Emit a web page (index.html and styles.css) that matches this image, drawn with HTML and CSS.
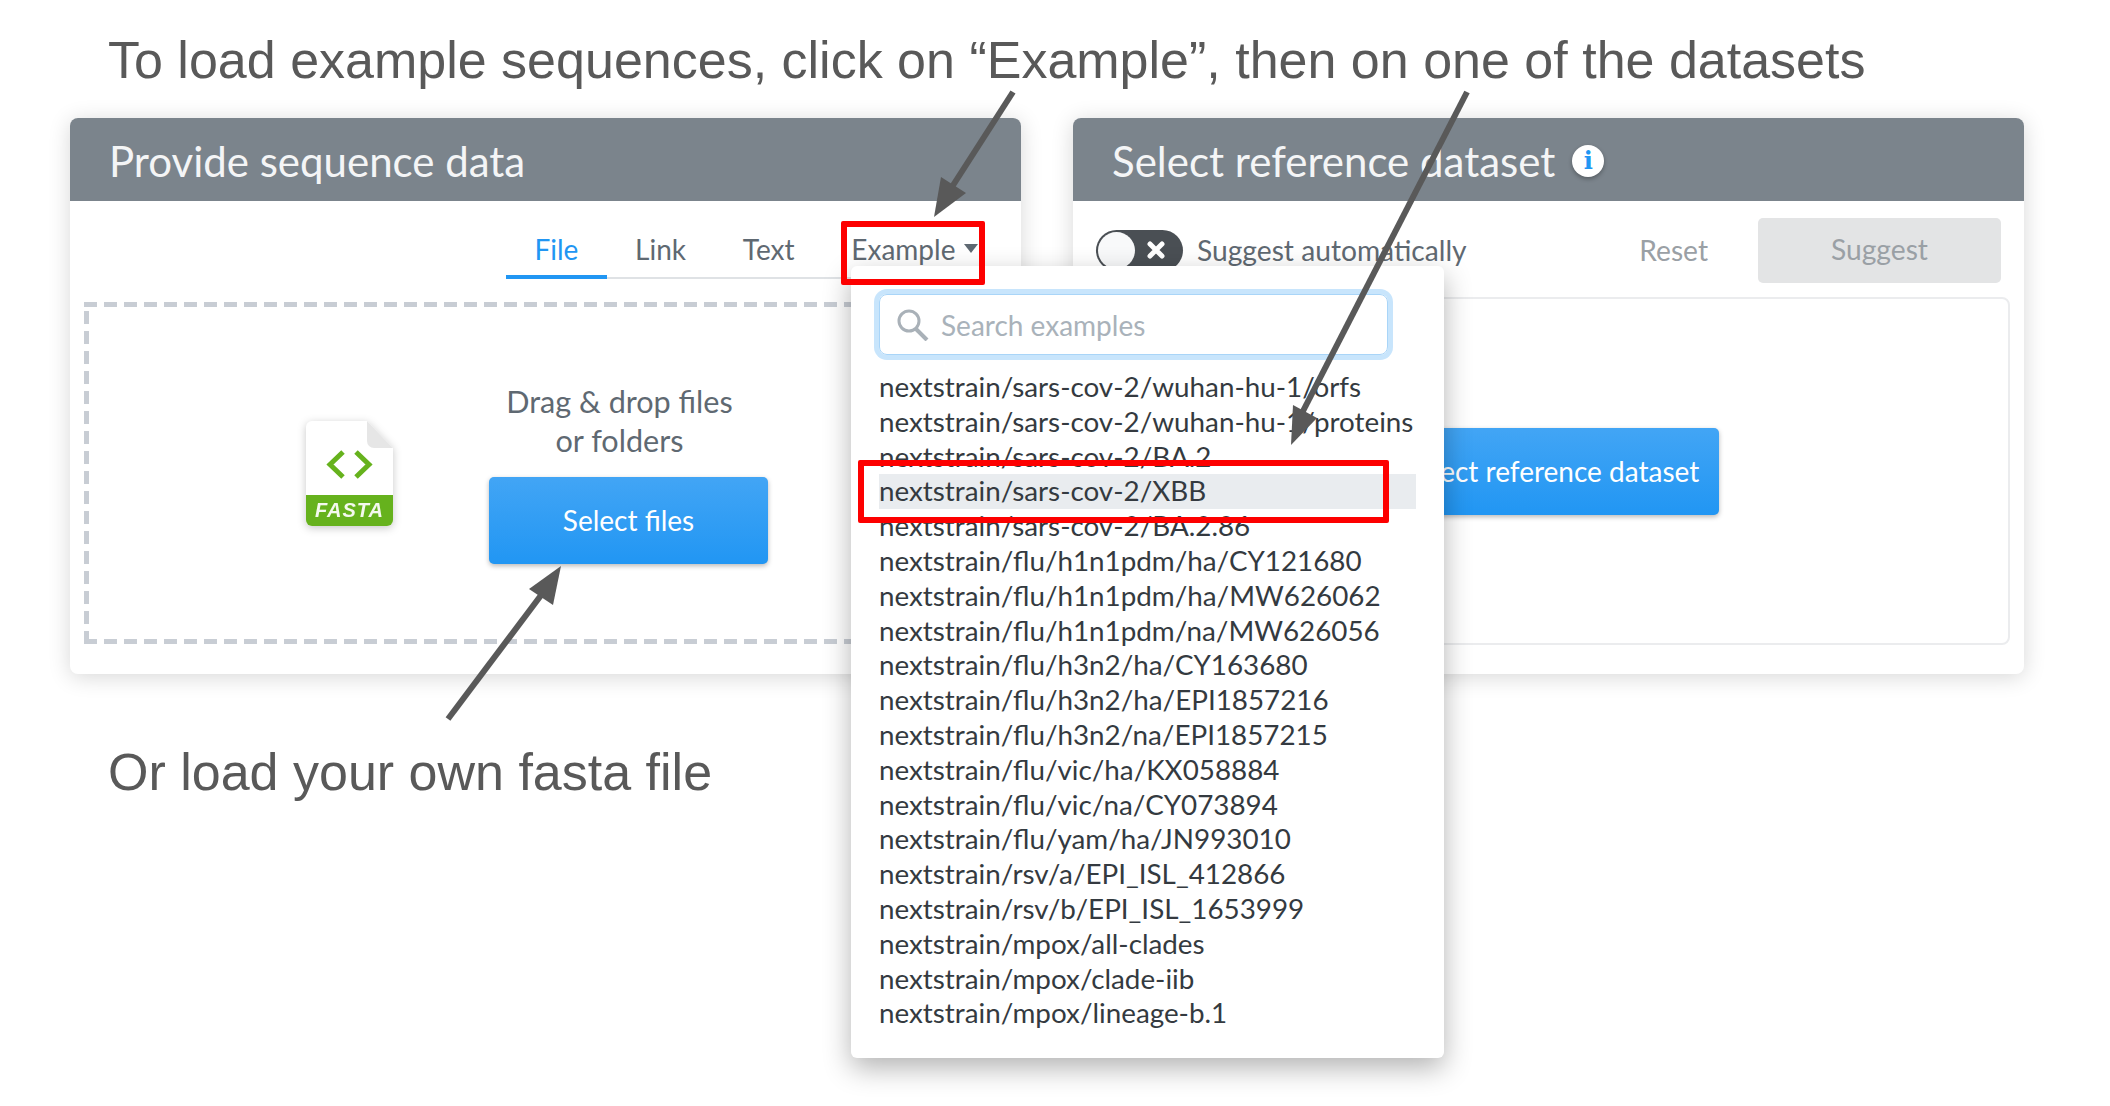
FILE: index.html
```html
<!DOCTYPE html>
<html lang="en">
  <head>
    <meta charset="UTF-8" />
    <title>Load example sequences</title>
    <link rel="stylesheet" href="styles.css">
  </head>
  <body>
    <div class="page">
      <p class="note note-top">To load example sequences, click on “Example”, then on one of the datasets</p>

      <div class="panels">
        <section class="card">
          <h2 class="card-header">Provide sequence data</h2>
          <ul class="tabs">
            <li class="tab active">File</li>
            <li class="tab">Link</li>
            <li class="tab">Text</li>
            <li class="tab">Example<span class="caret"></span></li>
          </ul>
          <div class="dropzone">
            <svg class="file-icon" width="107" height="125" viewBox="0 0 107 125">
              <path d="M16 10h55l26 27v72a6 6 0 0 1-6 6H16a6 6 0 0 1-6-6V16a6 6 0 0 1 6-6z" fill="#fff" />
              <path d="M71 10l26 27H78a7 7 0 0 1-7-7z" fill="#e6e6e6" />
              <path d="M10 84h87v25a6 6 0 0 1-6 6H16a6 6 0 0 1-6-6z" fill="#66b21d" />
              <path d="M47 41L34 53.500 47 66M60 41l13 12.500L60 66" fill="none" stroke="#66b21d" stroke-width="5" />
              <text x="53.500" y="106" class="file-label">FASTA</text>
            </svg>
            <div class="drop-action">
              <p class="drop-text">Drag &amp; drop files<br />or folders</p>
              <button class="btn-primary btn-files">Select files</button>
            </div>
          </div>
        </section>

        <section class="card">
          <h2 class="card-header">Select reference dataset <span class="info">i</span></h2>
          <div class="suggest-row">
            <span class="toggle">
              <span class="knob"></span>
              <svg class="toggle-x" width="20" height="20" viewBox="0 0 20 20">
                <path d="M4 4l12 12M16 4L4 16" stroke="#fff" stroke-width="5" stroke-linecap="round" />
              </svg>
            </span>
            <span class="suggest-label">Suggest automatically</span>
            <span class="reset">Reset</span>
            <span class="btn-suggest">Suggest</span>
          </div>
          <div class="dataset-box">
            <button class="btn-primary btn-dataset">Select reference dataset</button>
          </div>
        </section>
      </div>

      <p class="note note-bottom">Or load your own fasta file</p>

      <div class="dropdown">
        <div class="search">
          <svg width="34" height="32" viewBox="0 0 34 32">
            <circle cx="13" cy="12" r="10" fill="none" stroke="#a9b1b8" stroke-width="3" />
            <path d="M20 20l11 11" stroke="#a9b1b8" stroke-width="4" />
          </svg>
          <span>Search examples</span>
        </div>
        <ul class="items">
          <li>nextstrain/sars-cov-2/wuhan-hu-1/orfs</li>
          <li>nextstrain/sars-cov-2/wuhan-hu-1/proteins</li>
          <li>nextstrain/sars-cov-2/BA.2</li>
          <li class="selected">nextstrain/sars-cov-2/XBB</li>
          <li>nextstrain/sars-cov-2/BA.2.86</li>
          <li>nextstrain/flu/h1n1pdm/ha/CY121680</li>
          <li>nextstrain/flu/h1n1pdm/ha/MW626062</li>
          <li>nextstrain/flu/h1n1pdm/na/MW626056</li>
          <li>nextstrain/flu/h3n2/ha/CY163680</li>
          <li>nextstrain/flu/h3n2/ha/EPI1857216</li>
          <li>nextstrain/flu/h3n2/na/EPI1857215</li>
          <li>nextstrain/flu/vic/ha/KX058884</li>
          <li>nextstrain/flu/vic/na/CY073894</li>
          <li>nextstrain/flu/yam/ha/JN993010</li>
          <li>nextstrain/rsv/a/EPI_ISL_412866</li>
          <li>nextstrain/rsv/b/EPI_ISL_1653999</li>
          <li>nextstrain/mpox/all-clades</li>
          <li>nextstrain/mpox/clade-iib</li>
          <li>nextstrain/mpox/lineage-b.1</li>
        </ul>
      </div>

      <div class="red-box red-example"></div>
      <div class="red-box red-item"></div>

      <svg class="arrows" width="2110" height="1106" viewBox="0 0 2110 1106">
        <g stroke="#595959" stroke-width="6" fill="none">
          <path d="M1013 92L950 190" />
          <path d="M1467 92L1301 415" />
          <path d="M448 719L545 590" />
        </g>
        <g fill="#595959">
          <path d="M934 217L941 177L966 193z" />
          <path d="M1291 445L1293 405L1317 418z" />
          <path d="M561 566L553 605L529 589z" />
        </g>
      </svg>
    </div>
  </body>
</html>
```

FILE: styles.css
```css
body {
  margin: 0;
  background-color: #fff;
  font-family: Lato, "Open Sans", sans-serif;
}

.page {
  position: relative;
  width: 2110px;
  height: 1106px;
  overflow: hidden;
}

.note {
  margin: 0;
  padding-left: 108px;
  font-family: "Liberation Sans", Arial, sans-serif;
  font-size: 52px;
  color: #595959;
}

.note-top {
  height: 118px;
  line-height: 120px;
}

.note-bottom {
  margin-top: 69px;
  line-height: 58px;
}

.panels {
  display: flex;
  gap: 52px;
  padding-left: 70px;
}

.card {
  width: 951px;
  height: 556px;
  background-color: #fff;
  border-radius: 8px;
  box-shadow: 0 3px 22px rgba(0, 0, 0, 0.16);
}

.card-header {
  display: flex;
  align-items: center;
  gap: 17px;
  height: 81px;
  margin: 0;
  padding: 2px 0 0 39px;
  background-color: #7b848c;
  border-radius: 8px 8px 0 0;
  color: #f4f5f6;
  font-size: 42px;
  font-weight: 400;
}

.info {
  width: 32px;
  height: 32px;
  background-color: #fff;
  border-radius: 50%;
  box-shadow: 0 2px 4px rgba(0, 0, 0, 0.3);
  color: #2196f3;
  font-family: "DejaVu Serif", serif;
  font-size: 24px;
  font-weight: 700;
  line-height: 32px;
  text-align: center;
}

.tabs {
  display: flex;
  height: 76px;
  margin: 0 0 0 436px;
  padding: 0;
  border-bottom: 2px solid #dfe2e5;
  list-style: none;
}

.tab {
  padding: 0 28.400px;
  color: #5f6972;
  font-size: 28px;
  line-height: 96px;
  white-space: nowrap;
}

.tab.active {
  margin-bottom: -2px;
  border-bottom: 4px solid #2196f3;
  color: #2196f3;
}

.caret {
  display: inline-block;
  margin-left: 9px;
  border-top: 9px solid #5f6972;
  border-left: 7px solid transparent;
  border-right: 7px solid transparent;
  vertical-align: 7px;
}

.dropzone {
  display: flex;
  align-items: center;
  width: 923px;
  height: 342px;
  margin: 23px 0 0 14px;
  padding-left: 212px;
  box-sizing: border-box;
  background-image:
    repeating-linear-gradient(90deg, #c8cdd4 0 13px, transparent 13px 20px),
    repeating-linear-gradient(90deg, #c8cdd4 0 13px, transparent 13px 20px),
    repeating-linear-gradient(0deg, #c8cdd4 0 13px, transparent 13px 20px),
    repeating-linear-gradient(0deg, #c8cdd4 0 13px, transparent 13px 20px);
  background-position: 0 0, 0 100%, 0 0, 100% 0;
  background-size: 100% 5px, 100% 5px, 5px 100%, 5px 100%;
  background-repeat: no-repeat;
}

.file-icon {
  filter: drop-shadow(0 2px 4px rgba(0, 0, 0, 0.22));
  flex: none;
}

.file-label {
  fill: #f4f9ee;
  font-family: "Liberation Sans", Arial, sans-serif;
  font-size: 20px;
  font-style: italic;
  font-weight: 700;
  letter-spacing: 1px;
  text-anchor: middle;
}

.drop-action {
  margin-left: 86px;
}

.drop-text {
  margin: 0 0 17px;
  padding-right: 18px;
  color: #5f6972;
  font-size: 30.600px;
  line-height: 39px;
  text-align: center;
}

.btn-primary {
  border: none;
  border-radius: 5px;
  background-image: linear-gradient(#42a5f5, #2196f3);
  box-shadow: 0 2px 5px rgba(0, 0, 0, 0.28);
  color: #fff;
  font-family: inherit;
  font-size: 28px;
}

.btn-files {
  display: block;
  width: 279px;
  height: 87px;
  padding-bottom: 3px;
}

.suggest-row {
  display: flex;
  align-items: center;
  height: 65px;
  margin: 17px 23px 0;
  color: #5f6972;
  font-size: 28.200px;
}

.toggle {
  position: relative;
  flex: none;
  width: 87px;
  height: 41px;
  background-color: #4a4f54;
  border-radius: 21px;
}

.knob {
  position: absolute;
  top: 2px;
  left: 2px;
  width: 37px;
  height: 37px;
  background-color: #f8f9fa;
  border-radius: 50%;
}

.toggle-x {
  position: absolute;
  top: 10px;
  left: 50px;
}

.suggest-label {
  margin: -2px 0 0 14px;
}

.reset {
  margin: -2px 0 0 auto;
  color: #9aa0a5;
}

.btn-suggest {
  width: 243px;
  margin-left: 50px;
  padding-bottom: 3px;
  background-color: #e3e4e5;
  border-radius: 5px;
  color: #9aa0a5;
  line-height: 62px;
  text-align: center;
}

.dataset-box {
  display: flex;
  justify-content: center;
  align-items: center;
  width: 914px;
  height: 348px;
  margin: 14px 0 0 23px;
  box-sizing: border-box;
  border: 2px solid #ebecee;
  border-radius: 8px;
}

.btn-dataset {
  width: 332px;
  height: 87px;
  padding-right: 9px;
}

.dropdown {
  position: absolute;
  top: 266px;
  left: 851px;
  width: 593px;
  height: 792px;
  background-color: #fff;
  border-radius: 6px;
  box-shadow: 0 10px 28px rgba(0, 0, 0, 0.3);
}

.search {
  display: flex;
  align-items: center;
  gap: 11px;
  width: 509px;
  height: 61px;
  margin: 28px 0 0 28px;
  padding-left: 16px;
  box-sizing: border-box;
  border: 1px solid #a9d5f8;
  border-radius: 8px;
  box-shadow: 0 0 0 5px #c8e5fc;
  color: #a9b2ba;
  font-size: 28px;
}

.items {
  margin: 15px 0 0 28px;
  padding: 0;
  width: 537px;
  color: #343a40;
  font-size: 27.800px;
  line-height: 34.800px;
  list-style: none;
  white-space: nowrap;
}

.items .selected {
  background-color: #e9ecef;
}

.red-box {
  position: absolute;
  box-sizing: border-box;
  border: 6px solid #fd0000;
  border-radius: 2px;
}

.red-example {
  top: 221px;
  left: 841px;
  width: 144px;
  height: 64px;
}

.red-item {
  top: 460px;
  left: 858px;
  width: 531px;
  height: 63px;
}

.arrows {
  position: absolute;
  top: 0;
  left: 0;
  pointer-events: none;
}
```
